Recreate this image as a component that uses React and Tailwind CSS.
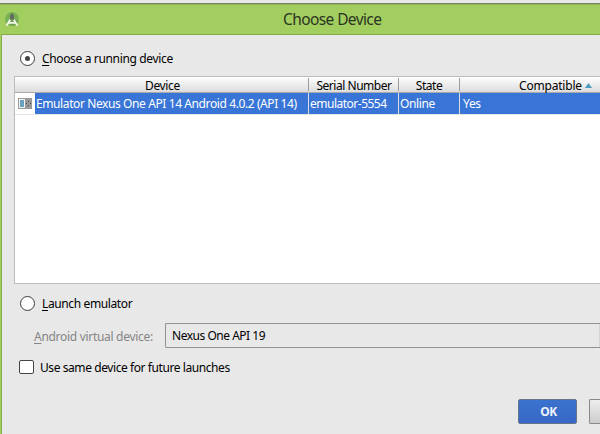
import React from 'react';

function Radio({ checked }) {
  return (
    <span className="flex size-[15px] shrink-0 items-center justify-center rounded-full border border-[#3c3c3c] bg-white">
      {checked && <span className="size-[5px] rounded-full bg-[#444]" />}
    </span>
  );
}

function StudioIcon() {
  return (
    <svg width="16" height="16" viewBox="0 0 16 16" className="shrink-0">
      <circle cx="7" cy="7" r="7" fill="#79b254" />
      <path d="M7 3 L13 9 L11 13 L7 14 L3 12 Z" fill="#6fa34d" />
      <path d="M1.6 13.6 L5.6 7 M8.4 7 L12.4 13.6 M3 10.8 H11" fill="none" stroke="#f4f7ef" strokeWidth="1.8" />
      <circle cx="7" cy="4.4" r="2.2" fill="#62695f" />
      <path d="M7 1.2 V4 M5.6 8 L6.2 6 M8.4 8 L7.8 6" stroke="#62695f" strokeWidth="1.5" />
    </svg>
  );
}

function EmulatorIcon() {
  return (
    <svg width="14" height="11" viewBox="0 0 14 11" shapeRendering="crispEdges" className="shrink-0">
      <rect width="14" height="11" fill="#999" />
      <rect x="1" y="1" width="6" height="9" fill="#f4f4f4" />
      <rect x="2" y="2" width="4" height="7" fill="#67a3bc" />
      <path d="M8 5h1v1h-1z M10 3h1v1h-1z M10 7h1v1h-1z M12 5h1v1h-1z" fill="#444" />
    </svg>
  );
}

function HeaderDivider() {
  return <i className="mt-px h-[13px] w-px shrink-0 bg-[#9c9c9c]" />;
}

export default function App() {
  return (
    <div className="flex h-[434px] w-[600px] flex-col overflow-hidden bg-[#e8e8e8] pt-[3px] font-['Noto_Sans',sans-serif] text-[12px] leading-[16px] whitespace-nowrap text-black">
      <header className="flex h-[31px] shrink-0 border-t border-[#75845f] bg-[#a2ce60] pt-[8px] pl-[5px] shadow-[inset_0_1px_#8eb455]">
        <StudioIcon />
        <h1 className="ml-[262px] -mt-[3px] text-[15.5px] leading-[21px] tracking-[-0.6px] text-[#2c3520]">Choose Device</h1>
      </header>
      <div className="flex min-h-0 flex-1 border-l border-[#a2ce60]">
        <main className="flex min-w-0 flex-1 flex-col border-t border-l border-[#84ad48] bg-[#e8e8e8]">
          <label className="mt-[15px] ml-[18px] flex h-[16px] items-center">
            <Radio checked />
            <span className="mt-px ml-[7px] tracking-[-0.35px]"><u className="underline-offset-2">C</u>hoose a running device</span>
          </label>
          <section className="mt-[10px] ml-[12px] h-[208px] border-y border-l border-[#bcbcbc] bg-white">
            <div className="flex h-[16px] border-b border-[#aaa] bg-linear-to-b from-white to-[#dcdcdc] text-center leading-[18px]">
              <span className="w-[293px] pl-[2px] tracking-[-0.35px]">Device</span>
              <HeaderDivider />
              <span className="w-[89px] pl-px tracking-[-0.47px]">Serial Number</span>
              <HeaderDivider />
              <span className="w-[60px] tracking-[-0.47px]">State</span>
              <HeaderDivider />
              <div className="flex flex-1 items-start pl-[59px] tracking-[-0.2px]">
                Compatible
                <svg width="7" height="5" viewBox="0 0 7 5" className="mt-[6px] ml-[3px]"><path d="M3.5 0 L7 5 H0Z" fill="#4b9abf" /></svg>
              </div>
            </div>
            <div className="flex h-[22px] border-b border-[#e4e4e4] leading-[21px] text-white">
              <div className="flex w-[20px] items-center pl-[3px]"><EmulatorIcon /></div>
              <span className="w-[274px] border-r border-[#ddd] bg-[#3875d7] pl-[1px] tracking-[-0.4px]">Emulator Nexus One API 14 Android 4.0.2 (API 14)</span>
              <span className="w-[90px] border-r border-[#ddd] bg-[#3875d7] pl-[1px] tracking-[-0.5px]">emulator-5554</span>
              <span className="w-[61px] border-r border-[#ddd] bg-[#3875d7] pl-[1px] tracking-[-0.4px]">Online</span>
              <span className="flex-1 bg-[#3875d7] pl-[3px] tracking-[-0.3px]">Yes</span>
            </div>
          </section>
          <label className="mt-[11px] ml-[18px] flex h-[16px] items-center">
            <Radio />
            <span className="mt-px ml-[7px] tracking-[-0.38px]"><u className="underline-offset-2">L</u>aunch emulator</span>
          </label>
          <div className="mt-[12px] ml-[32px] flex h-[25px]">
            <span className="w-[131px] pt-[6px] tracking-[-0.3px] text-[#858585]"><u className="underline-offset-2">A</u>ndroid virtual device:</span>
            <div className="flex flex-1 rounded-l-[2px] border-y border-l border-[#929292] pt-[4px] pl-[6px]">
              <span className="flex-1 tracking-[-0.48px]">Nexus One API 19</span>
              <span className="-mt-[4px] w-px bg-[#d4d4d4]" />
            </div>
          </div>
          <label className="mt-[11px] ml-[17px] flex h-[16px] items-center">
            <span className="h-[14px] w-[15px] rounded-[2px] border border-[#444] bg-white" />
            <span className="mt-px ml-[6px] tracking-[-0.42px]">Use same device for future launches</span>
          </label>
          <footer className="mt-[24px] flex justify-end">
            <button className="h-[25px] w-[59px] rounded-[2px] border border-[#66758a] bg-linear-to-b from-[#3a73ce] to-[#3967c6] pl-[2px] text-[12px] font-bold tracking-[-0.5px] text-[#eef2fa]">OK</button>
            <button className="ml-[12px] h-[25px] w-[11px] rounded-l-[2px] border-y border-l border-[#888] bg-linear-to-b from-[#eee] to-[#ccc]" />
          </footer>
        </main>
      </div>
    </div>
  );
}
